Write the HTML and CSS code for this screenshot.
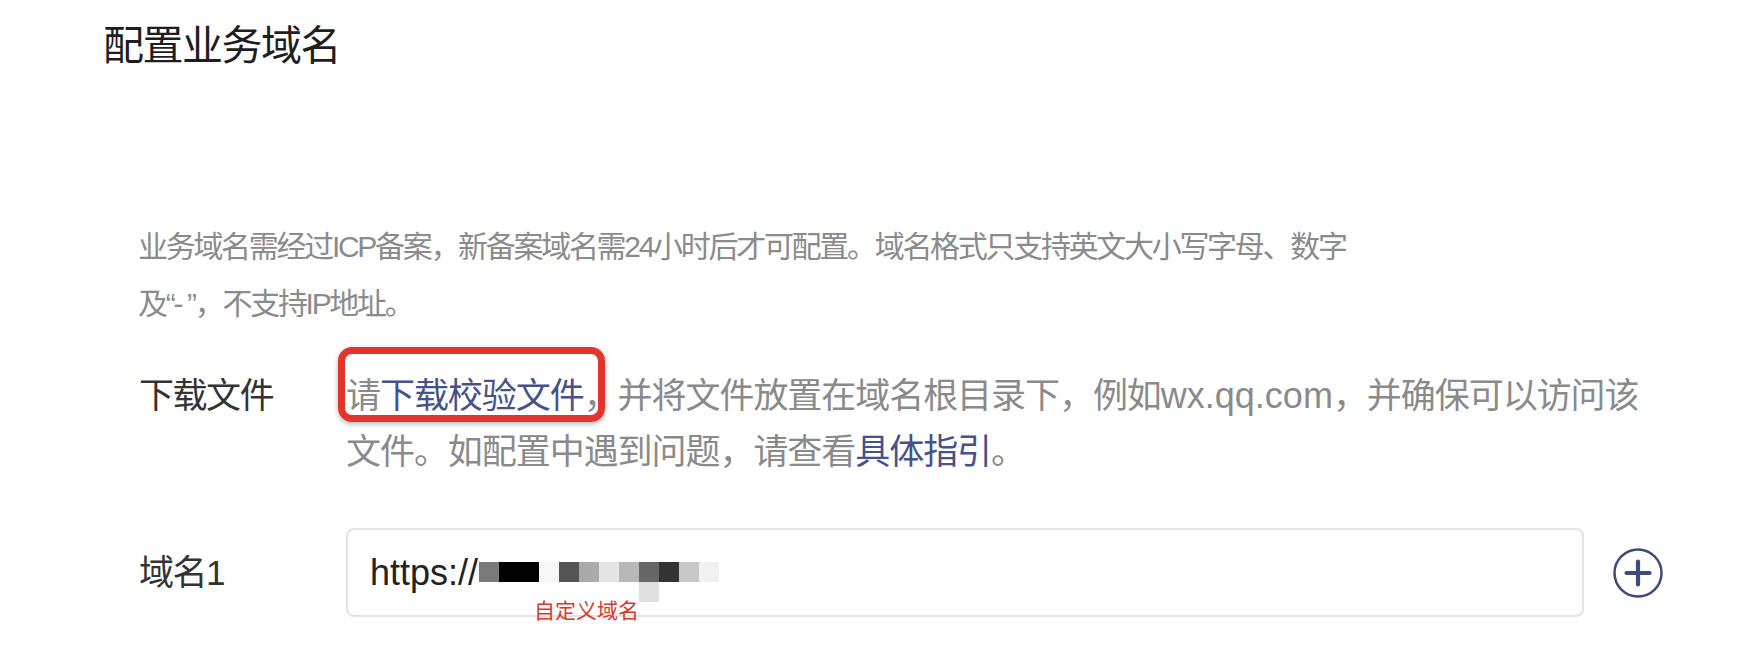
FILE: index.html
```html
<!DOCTYPE html>
<html lang="zh-CN">
<head>
<meta charset="utf-8">
<title>配置业务域名</title>
<link rel="stylesheet" href="styles.css">
</head>
<body>
<div class="page">
  <h1 class="title">配置业务域名</h1>
  <p class="notice">业务域名需经过ICP备案，新备案域名需24小时后才可配置。域名格式只支持英文大小写字母、数字及“- ”，不支持IP地址。</p>
  <div class="field field-download">
    <div class="label">下载文件</div>
    <p class="field-text">请<a class="link">下载校验文件</a>，并将文件放置在域名根目录下，例如<span class="example">wx.qq.com</span>，并确保可以访问该文件。如配置中遇到问题，请查看<a class="link">具体指引</a>。</p>
  </div>
  <div class="field field-domain">
    <div class="label">域名1</div>
    <div class="input">
      <span class="prefix">https://</span>
      <span class="mosaic">
        <i class="m m1"></i><i class="m m2"></i><i class="m m3"></i><i class="m m4"></i><i class="m m5"></i><i class="m m6"></i><i class="m m7"></i><i class="m m8 drip"></i><i class="m m9"></i><i class="m m10"></i><i class="m m11"></i>
      </span>
      <span class="note">自定义域名</span>
    </div>
    <button class="add" type="button" aria-label="添加域名">
      <svg width="50" height="50" viewBox="0 0 50 50">
        <circle cx="25" cy="25" r="23.5" fill="none" stroke="#3f4b7a" stroke-width="2.5"/>
        <path d="M25 13.5V36.5M13.5 25H36.5" stroke="#3f4b7a" stroke-width="4.2" stroke-linecap="round"/>
      </svg>
    </button>
  </div>
</div>
</body>
</html>
```
FILE: styles.css
```css
html, body {
  margin: 0;
  padding: 0;
  background: #ffffff;
}

body {
  font-family: "Liberation Sans", "Noto Sans CJK SC", sans-serif;
}

.page {
  width: 1762px;
  height: 646px;
  overflow: hidden;
}

.title {
  margin: 0;
  padding: 18px 0 0 103px;
  font-size: 41px;
  letter-spacing: -1.5px;
  line-height: 56px;
  font-weight: 400;
  color: #1e1e1e;
}

.notice {
  margin: 144px 0 0 138px;
  width: 1220px;
  font-size: 30px;
  letter-spacing: -2.3px;
  line-height: 57px;
  color: #8b8b8b;
}

.field {
  display: grid;
  grid-template-columns: 207px auto auto;
  justify-content: start;
  padding-left: 139px;
}

.field-download {
  margin-top: 36px;
  align-items: start;
}

.label {
  font-size: 35px;
  letter-spacing: -1.45px;
  line-height: 56px;
  color: #333333;
}

.field-text {
  position: relative;
  margin: 0;
  width: 1300px;
  font-size: 35px;
  letter-spacing: -1.05px;
  line-height: 56px;
  color: #8a8a8a;
}

.field-text::before {
  content: "";
  position: absolute;
  left: -8px;
  top: -21px;
  width: 267px;
  height: 75px;
  box-sizing: border-box;
  border: 7px solid #e3342b;
  border-radius: 14px;
  box-shadow: 0 2px 5px rgba(0, 0, 0, 0.3);
  pointer-events: none;
}

.example {
  font-size: 36px;
  letter-spacing: 0;
}

.link {
  color: #465289;
  text-decoration: none;
}

.field-domain {
  margin-top: 48px;
  align-items: center;
}

.input {
  position: relative;
  box-sizing: border-box;
  width: 1238px;
  height: 89px;
  border: 2px solid #e2e3e7;
  border-radius: 8px;
  display: flex;
  align-items: center;
  padding-left: 22px;
}

.prefix {
  font-size: 36px;
  color: #222222;
}

.mosaic {
  display: flex;
  margin-left: 1px;
  margin-top: -2px;
}

.m {
  display: block;
  width: 20px;
  height: 20px;
  position: relative;
}

.m1 { width: 20px; background: #7a7a7a; }
.m2 { width: 40px; background: #000000; }
.m3 { background: #f8f8f8; }
.m4 { background: #555555; }
.m5 { background: #aaaaaa; }
.m6 { background: #e6e6e6; }
.m7 { background: #b8b8b8; }
.m8 { background: #666666; }
.m9 { background: #333333; }
.m10 { background: #c8c8c8; }
.m11 { background: #f2f2f2; }

.drip::after {
  content: "";
  position: absolute;
  left: 0;
  top: 100%;
  width: 20px;
  height: 20px;
  background: #e0e0e0;
}

.note {
  position: absolute;
  left: 186px;
  top: 67px;
  font-family: "Noto Sans CJK SC", sans-serif;
  font-size: 21px;
  line-height: 24px;
  color: #d6392d;
}

.add {
  margin-left: 29px;
  padding: 0;
  border: 0;
  background: none;
  width: 50px;
  height: 50px;
  display: block;
}

.add svg {
  display: block;
}
```
